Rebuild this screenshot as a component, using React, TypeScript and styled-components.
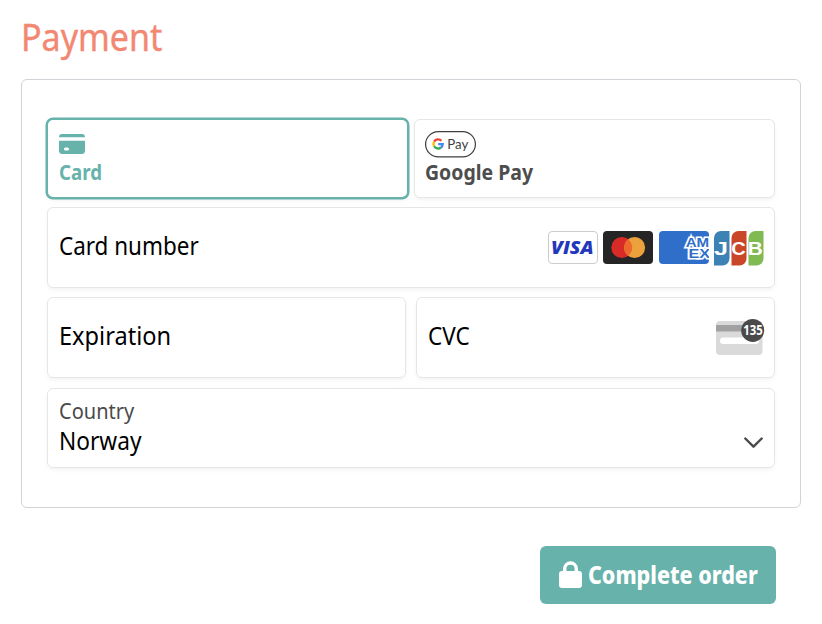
import React from "react";
import styled, { createGlobalStyle } from "styled-components";

const GlobalStyle = createGlobalStyle`
  * { box-sizing: border-box; }
  body { margin: 0; background: #fff; font-family: "Noto Sans", "Open Sans", sans-serif; }
`;

const Page = styled.main`
  width: 822px;
  height: 624px;
  padding: 12px 21px 0;
  overflow: hidden;
`;

const Title = styled.h1`
  margin: 0;
  height: 67px;
  font-size: 38px;
  line-height: 48px;
  font-weight: 400;
  color: #f28872;
  -webkit-text-stroke: 0.4px #f28872;
`;

const Panel = styled.section`
  width: 780px;
  height: 429px;
  padding: 38px 25px 0;
  border: 1px solid #d0d4d8;
  border-radius: 6px;
`;

const Narrow = styled.span<{ $scale: number }>`
  display: inline-block;
  white-space: nowrap;
  transform: scaleX(${(p) => p.$scale});
  transform-origin: 0 50%;
`;

const Tabs = styled.div`
  display: flex;
  gap: 5px;
  height: 89px;
  margin-left: -1px;
  align-items: flex-start;
`;

const Tab = styled.button<{ $active?: boolean }>`
  display: flex;
  flex-direction: column;
  align-items: flex-start;
  width: ${(p) => (p.$active ? 363 : 361)}px;
  height: ${(p) => (p.$active ? 81 : 79)}px;
  margin-top: ${(p) => (p.$active ? 0 : 1)}px;
  padding: ${(p) => (p.$active ? "14px 11px 0" : "11px 10px 0")};
  border: ${(p) => (p.$active ? "2px solid #67b2ab" : "1px solid #e6e6e6")};
  border-radius: ${(p) => (p.$active ? 7 : 6)}px;
  background: #fff;
  color: ${(p) => (p.$active ? "#67b2ab" : "#4d4d4d")};
  box-shadow: ${(p) => (p.$active ? "0 0 0 0.5px #67b2ab, " : "")}0 2px 3px rgba(0, 0, 0, 0.03), 0 3px 8px rgba(0, 0, 0, 0.02);
  font-family: inherit;
`;

const TabLabel = styled.span<{ $offset: number }>`
  height: 30px;
  margin-top: ${(p) => p.$offset}px;
  font-size: 22px;
  line-height: 30px;
  font-weight: 700;
`;

const Fields = styled.div`
  display: grid;
  grid-template-columns: 359px 359px;
  grid-template-rows: 81px 81px 80px;
  column-gap: 10px;
  row-gap: 9.4px;
`;

const Field = styled.div<{ $wide?: boolean }>`
  display: flex;
  align-items: center;
  justify-content: space-between;
  grid-column: ${(p) => (p.$wide ? "1 / -1" : "auto")};
  padding: 0 10px 0 11px;
  border: 1px solid #e6e6e6;
  border-radius: 6px;
  box-shadow: 0 2px 3px rgba(0, 0, 0, 0.03), 0 3px 8px rgba(0, 0, 0, 0.02);
  color: #000;
  font-size: 25.5px;
  line-height: 36px;
`;

const FieldText = styled.div`
  margin-top: -5px;
`;

const CountryText = styled.div`
  margin-top: -5px;
  line-height: 30px;
`;

const CountryLabel = styled.div`
  font-size: 22px;
  color: #4a4a4a;
`;

const Brands = styled.div`
  display: grid;
  grid-template-columns: 50px 50px 50px 50px;
  column-gap: 5.4px;
  margin-top: 2px;
`;

const Actions = styled.div`
  display: flex;
  justify-content: flex-end;
  padding: 38px 25px 0 0;
`;

const OrderButton = styled.button`
  display: flex;
  align-items: center;
  gap: 6px;
  width: 236px;
  height: 58px;
  padding: 0 0 0 19px;
  border: 0;
  border-radius: 6px;
  background: #67b2ab;
  color: #fff;
  font-family: inherit;
  font-size: 25px;
  line-height: 36px;
  font-weight: 800;
`;

const ButtonLabel = styled.span`
  width: 170px;
  margin-top: -2px;
`;

const CardIcon = () => (
  <svg width="26" height="20" viewBox="0 0 26 20">
    <path fill="#67b2ab" d="M0 3.2C0 1.2 1.2 0 3 0h20c1.8 0 3 1.2 3 3.2zM0 6.7h26v10c0 2-1.2 3.300-3.200 3.300H3.200C1.200 20 0 18.700 0 16.700z" />
    <rect x="5" y="13.400" width="5" height="3" rx="1.500" fill="#fff" />
  </svg>
);

const GooglePayIcon = () => (
  <svg width="51" height="27" viewBox="0 0 51 27">
    <rect x="0.600" y="0.600" width="49.800" height="25.300" rx="12.650" fill="#fff" stroke="#3c4043" strokeWidth="1.200" />
    <g fill="none" strokeWidth="2.300">
      <path stroke="#ea4335" d="M9.100 10.600A4.600 4.600 0 0 1 16.400 9.800" />
      <path stroke="#fbbc04" d="M9.100 15.200A4.600 4.600 0 0 1 9.100 10.600" />
      <path stroke="#34a853" d="M9.100 15.200A4.600 4.600 0 0 0 16 16.500" />
      <path stroke="#4285f4" d="M16 16.500A4.600 4.600 0 0 0 17.700 13.200H13.200" />
    </g>
    <text x="22.300" y="17.800" fontFamily="Lato" fontSize="14" textLength="21" lengthAdjust="spacingAndGlyphs" fill="#3c4043">Pay</text>
  </svg>
);

const Visa = () => (
  <svg width="50" height="33" viewBox="0 0 50 33">
    <rect x="0.500" y="0.500" width="49" height="32" rx="3.500" fill="#fff" stroke="#ccc" />
    <text x="3" y="23" fontFamily="Open Sans" fontStyle="italic" fontWeight="800" fontSize="18" textLength="42.500" lengthAdjust="spacingAndGlyphs" fill="#2337bd">VISA</text>
  </svg>
);

const Mastercard = () => (
  <svg width="50" height="33" viewBox="0 0 50 33">
    <rect width="50" height="33" rx="4" fill="#252525" />
    <circle cx="18.800" cy="16.500" r="10.500" fill="#d82b27" />
    <circle cx="31.600" cy="16.500" r="10.500" fill="#eba23d" />
    <path fill="#ed682c" d="M25.200 8.200a10.500 10.500 0 0 1 0 16.600a10.500 10.500 0 0 1 0-16.600z" />
  </svg>
);

const Amex = () => (
  <svg width="50" height="33" viewBox="0 0 50 33">
    <clipPath id="amexEdge"><rect width="50" height="33" rx="4" /></clipPath>
    <g clipPath="url(#amexEdge)">
      <rect width="50" height="33" fill="#306fc9" />
      <g fill="#306fc9" stroke="#fff" strokeWidth="3.200" paintOrder="stroke" fontFamily="Liberation Sans" fontWeight="700" fontSize="13">
        <text x="26.700" y="15.500" textLength="23.500" lengthAdjust="spacingAndGlyphs">AM</text>
        <text x="29.500" y="26.700" textLength="21.500" lengthAdjust="spacingAndGlyphs">EX</text>
      </g>
    </g>
  </svg>
);

const Jcb = () => (
  <svg width="50" height="35" viewBox="0 0 50 35">
    <path fill="#3d82b5" d="M7 0h8.500v27.500a7 7 0 0 1-7 7H0V7a7 7 0 0 1 7-7z" />
    <path fill="#c94629" d="M24.500 0h8v27.500a7 7 0 0 1-7 7h-8V7a7 7 0 0 1 7-7z" />
    <path fill="#80ba53" d="M41.500 0h8v27.500a7 7 0 0 1-7 7h-8V7a7 7 0 0 1 7-7z" />
    <g fill="#fff" fontFamily="Liberation Sans" fontWeight="700" fontSize="17.500">
      <text x="0" y="23.600" textLength="14" lengthAdjust="spacingAndGlyphs">J</text>
      <text x="17.300" y="23.600" textLength="14.500" lengthAdjust="spacingAndGlyphs">C</text>
      <text x="33.700" y="23.600" textLength="15" lengthAdjust="spacingAndGlyphs">B</text>
    </g>
  </svg>
);

const CvcWrap = styled.span`
  display: flex;
  margin: -2px -1px 0 0;
`;

const CvcIcon = () => (
  <svg width="49" height="37" viewBox="0 0 49 37">
    <rect y="3" width="46.500" height="34" rx="4" fill="#dadada" />
    <path fill="#a1a1a1" d="M0 7h46v6.500H0z" />
    <rect x="4" y="19.500" width="39" height="6.500" rx="3.200" fill="#fff" />
    <circle cx="36.700" cy="12.400" r="11.500" fill="#4a4a4a" />
    <text x="27.200" y="17.200" fill="#fff" fontFamily="Noto Sans" fontWeight="700" fontSize="13.500" textLength="19.500" lengthAdjust="spacingAndGlyphs">135</text>
  </svg>
);

const Chevron = styled.svg`
  margin: 31px 1px 0 0;
`;

const LockSvg = styled.svg`
  flex: none;
  margin-top: -2px;
`;

const Lock = () => (
  <LockSvg width="23" height="27" viewBox="0 0 23 27">
    <rect y="10" width="23" height="17" rx="3" fill="#fff" />
    <path d="M5.700 12V7.800a5.800 5.800 0 0 1 11.600 0V12" fill="none" stroke="#fff" strokeWidth="3.400" />
  </LockSvg>
);

export default function App() {
  return (
    <Page>
      <GlobalStyle />
      <Title><Narrow $scale={0.895}>Payment</Narrow></Title>
      <Panel>
        <Tabs>
          <Tab $active>
            <CardIcon />
            <TabLabel $offset={2}><Narrow $scale={0.85}>Card</Narrow></TabLabel>
          </Tab>
          <Tab>
            <GooglePayIcon />
            <TabLabel $offset={-2}><Narrow $scale={0.885}>Google Pay</Narrow></TabLabel>
          </Tab>
        </Tabs>
        <Fields>
          <Field $wide>
            <FieldText><Narrow $scale={0.88}>Card number</Narrow></FieldText>
            <Brands><Visa /><Mastercard /><Amex /><Jcb /></Brands>
          </Field>
          <Field><FieldText><Narrow $scale={0.925}>Expiration</Narrow></FieldText></Field>
          <Field>
            <FieldText><Narrow $scale={0.88}>CVC</Narrow></FieldText>
            <CvcWrap><CvcIcon /></CvcWrap>
          </Field>
          <Field $wide>
            <CountryText>
              <CountryLabel><Narrow $scale={0.91}>Country</Narrow></CountryLabel>
              <Narrow $scale={0.89}>Norway</Narrow>
            </CountryText>
            <Chevron width="19" height="12" viewBox="0 0 19 12" fill="none">
              <path d="M1.300 1.500l8.200 8.200 8.200-8.200" stroke="#4a4a4a" strokeWidth="2.400" strokeLinecap="round" strokeLinejoin="round" />
            </Chevron>
          </Field>
        </Fields>
      </Panel>
      <Actions>
        <OrderButton>
          <Lock />
          <ButtonLabel><Narrow $scale={0.86}>Complete order</Narrow></ButtonLabel>
        </OrderButton>
      </Actions>
    </Page>
  );
}
